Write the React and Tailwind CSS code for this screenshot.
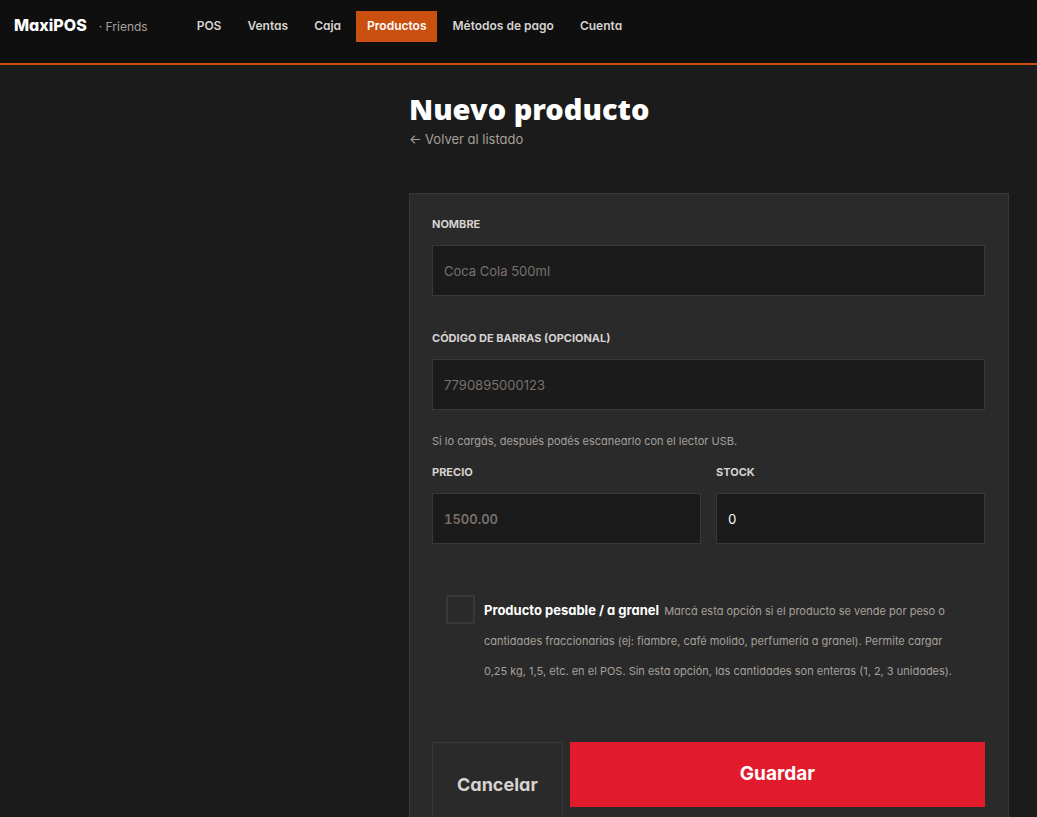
import React, { useState } from 'react'

const navItems = [
  { href: '#pos', label: 'POS' },
  { href: '#ventas', label: 'Ventas' },
  { href: '#caja', label: 'Caja' },
  { href: '#productos', label: 'Productos' },
  { href: '#metodos', label: 'Métodos de pago' },
  { href: '#cuenta', label: 'Cuenta' },
]

const Navbar = ({ active }) => {
  return (
    <header className="flex items-start bg-[#0f0f0f] border-b-2 border-[#ca5010] px-3.5 pt-[11px] pb-[21px]">
      <div className="flex items-baseline gap-3 mr-[38px] leading-7">
        <span className="text-base leading-7 font-extrabold text-white">MaxiPOS</span>
        <span className="text-xs leading-7 text-stone-400">· Friends</span>
      </div>
      <nav className="flex flex-wrap gap-1">
        {navItems.map((item) => (
          <a
            key={item.href}
            href={item.href}
            className={`px-[11px] pt-1 pb-1.5 text-xs leading-[21px] font-semibold ${
              item.label === active ? 'bg-[#ca5010] text-white' : 'text-stone-300 hover:text-white'
            }`}
          >
            {item.label}
          </a>
        ))}
      </nav>
    </header>
  )
}

const Field = ({ id, label, className = '', ...props }) => {
  return (
    <div>
      <label htmlFor={id} className="block text-[11px] leading-4 font-bold uppercase text-stone-300">
        {label}
      </label>
      <input
        id={id}
        className={`mt-[13px] block w-full h-[51px] border border-[#383838] bg-[#1b1b1b] px-[11px] text-[13px] text-white placeholder:text-stone-500 outline-none focus:border-[#ca5010] [font-feature-settings:normal] ${className}`}
        {...props}
      />
    </div>
  )
}

const ProductForm = () => {
  const [stock, setStock] = useState('0')
  const [weighable, setWeighable] = useState(false)

  return (
    <form className="mt-11 border border-[#383838] bg-[#2a2a2a] pl-[22px] pr-[23px] pt-[22px] pb-6">
      <Field id="nombre" label="Nombre" placeholder="Coca Cola 500ml" />
      <div className="mt-[34px]">
        <Field id="codigo" label="Código de barras (opcional)" placeholder="7790895000123" />
      </div>
      <p className="mt-[21px] text-[11px] leading-5 text-stone-400">
        Si lo cargás, después podés escanearlo con el lector USB.
      </p>

      <div className="mt-[13px] grid grid-cols-2 gap-[15px]">
        <Field
          id="precio"
          label="Precio"
          placeholder="1500.00"
          inputMode="decimal"
          className="font-semibold tabular-nums"
        />
        <Field
          id="stock"
          label="Stock"
          value={stock}
          onChange={(e) => setStock(e.target.value)}
          className="tabular-nums"
        />
      </div>

      <div className="mt-[51px] flex items-start gap-[9px] pl-3.5 pr-6">
        <input
          id="pesable"
          type="checkbox"
          checked={weighable}
          onChange={(e) => setWeighable(e.target.checked)}
          className="size-[29px] shrink-0 appearance-none border-2 border-[#383838] checked:bg-[#ca5010]"
        />
        <label htmlFor="pesable" className="text-[11px] leading-[30px] text-stone-400">
          <strong className="mr-0.5 text-[13px] font-bold text-white">Producto pesable / a granel</strong>{' '}
          Marcá esta opción si el producto se vende por peso o cantidades fraccionarias (ej: fiambre,
          café molido, perfumería a granel). Permite cargar 0,25 kg, 1,5, etc. en el POS. Sin esta
          opción, las cantidades son enteras (1, 2, 3 unidades).
        </label>
      </div>

      <div className="mt-14 flex items-start gap-[7px]">
        <a
          href="#productos"
          className="border border-[#383838] px-6 py-7 text-lg leading-7 font-bold text-stone-300"
        >
          Cancelar
        </a>
        <button
          type="submit"
          className="flex-1 h-[65px] bg-[#e11b2b] text-[19px] font-bold text-white [font-feature-settings:normal]"
        >
          Guardar
        </button>
      </div>
    </form>
  )
}

const App = () => {
  return (
    <div className="min-h-screen bg-[#1b1b1b] font-['Inter',sans-serif] [font-feature-settings:'cv11']">
      <Navbar active="Productos" />
      <main className="ml-auto w-full max-w-[628px] pt-6 pr-7 pb-10">
        <h1 className="font-['Noto_Sans',sans-serif] text-[29px] leading-10 font-black text-white">
          Nuevo producto
        </h1>
        <a href="#productos" className="block text-[13px] leading-5 text-stone-400">
          ← Volver al listado
        </a>
        <ProductForm />
      </main>
    </div>
  )
}

export default App
